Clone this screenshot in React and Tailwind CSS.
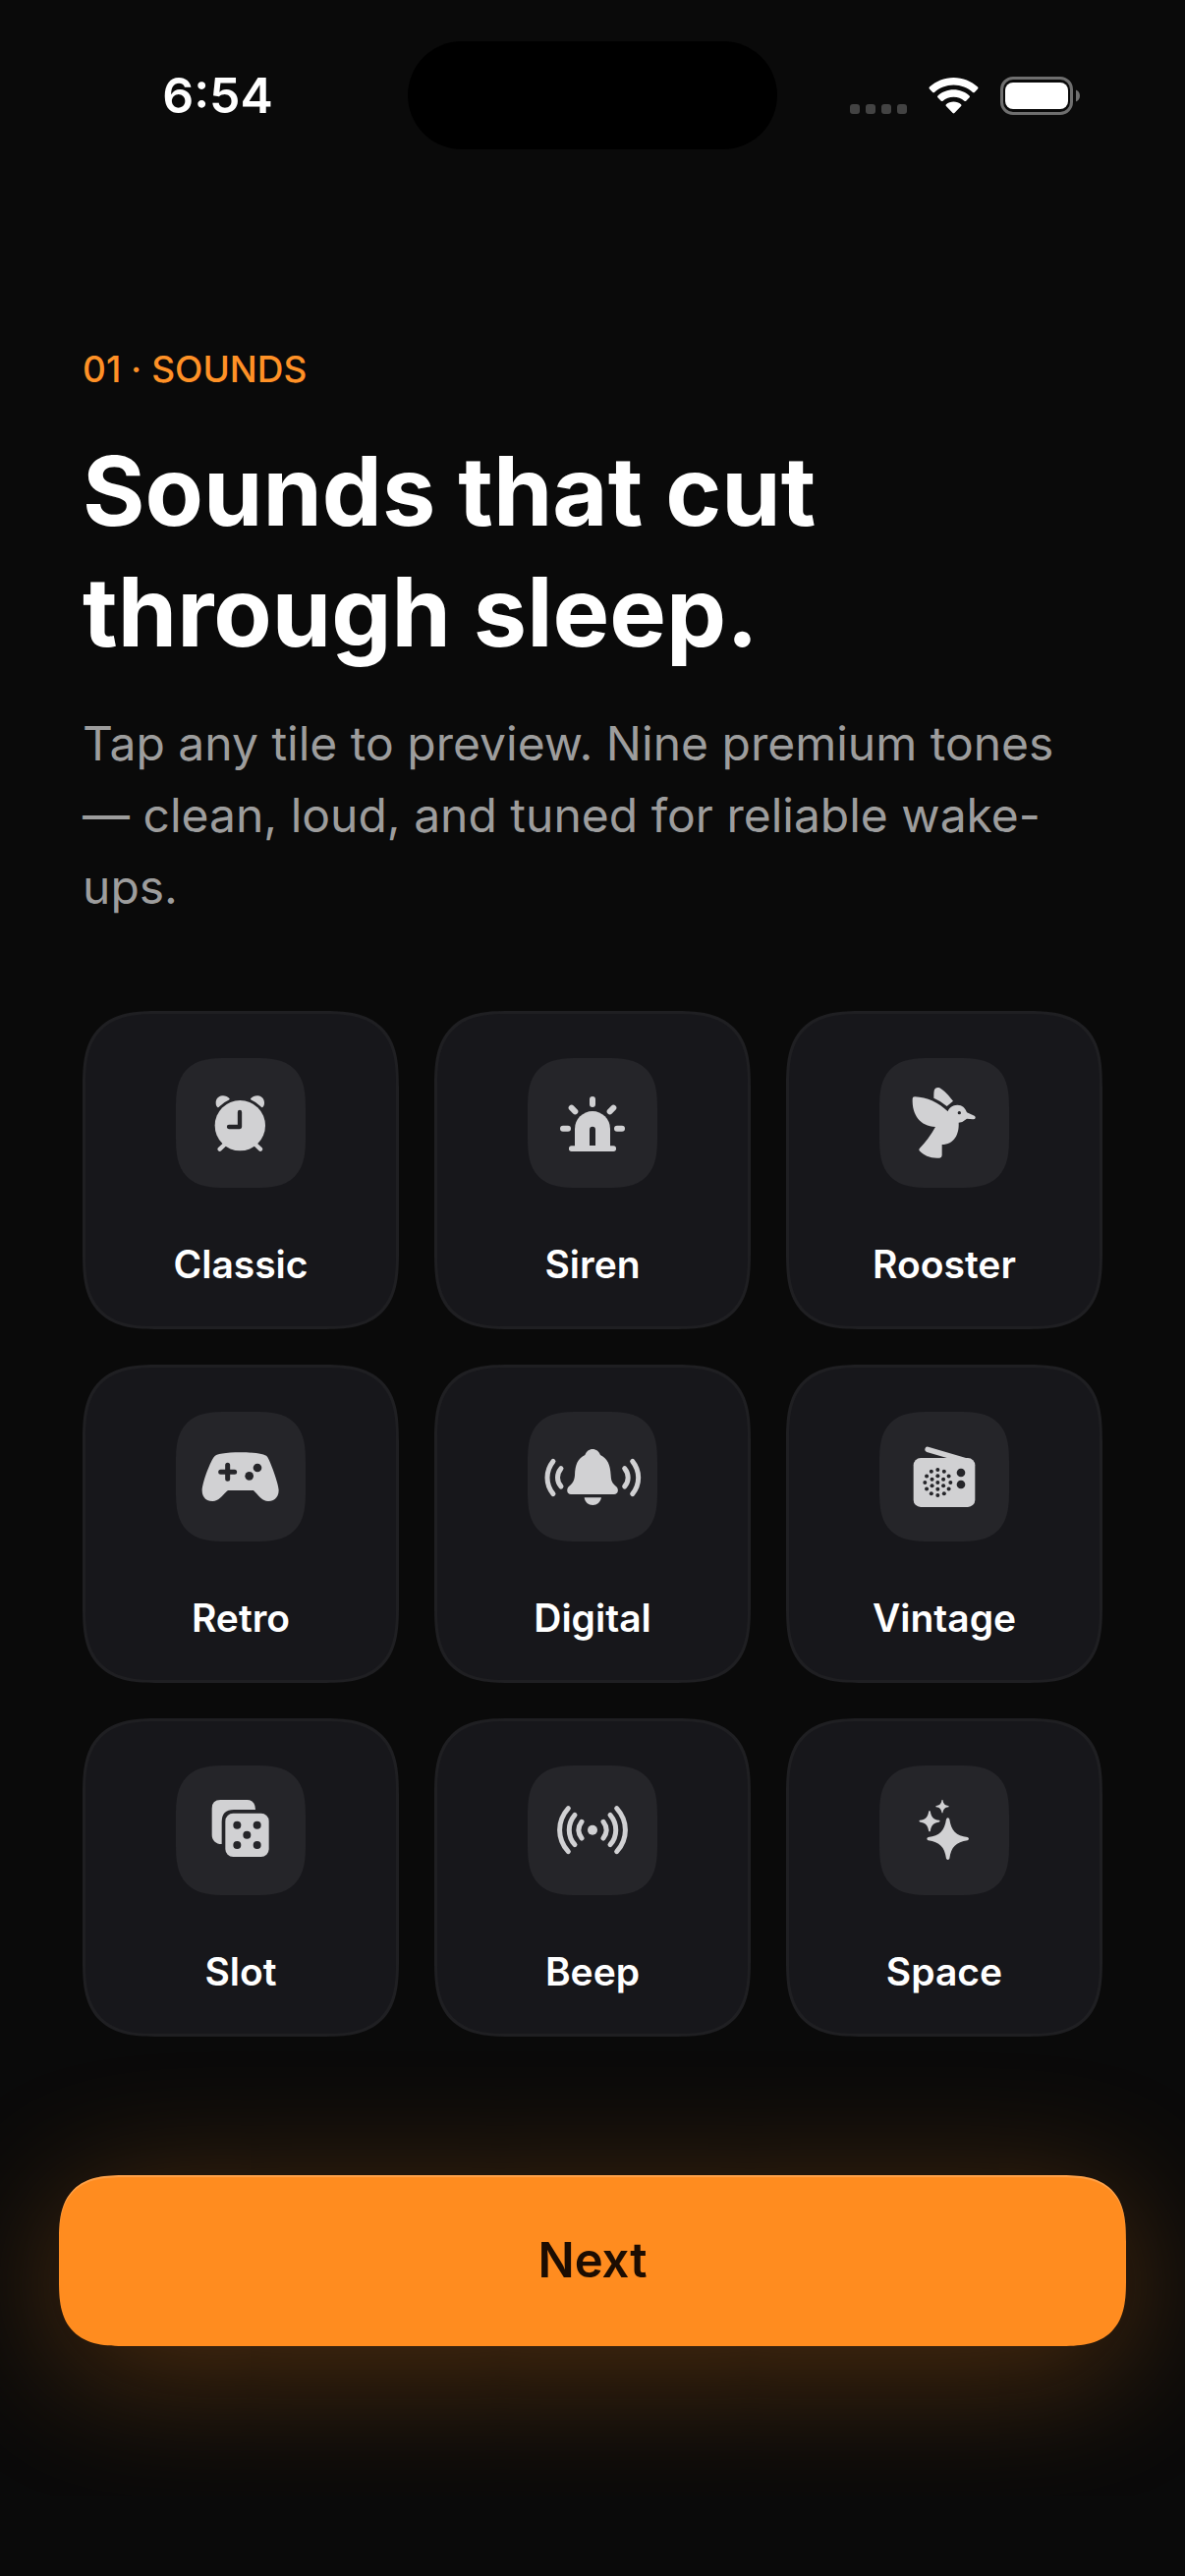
import React, { useState } from "react";

// All tile icons share a 396 unit grid that fills the icon box
const ICON = "#d1d1d3";
const CUT = "#252529";

const ClockIcon = () => (
  <>
    <circle cx="196" cy="206" r="77" fill={ICON} />
    <g fill={ICON}>
      <path
        id="clock-ear"
        d="M164 124C158 116 148 114 141 115C130 116 122 125 122 136C122 142 123 147 127 150C129 151 130 151 133 148Q146 134 161 128Q165 126 164 124Z"
      />
      <use href="#clock-ear" transform="translate(392 0) scale(-1 1)" />
    </g>
    <g fill="none" strokeWidth="13" strokeLinecap="round" strokeLinejoin="round">
      <path d="M152 261L134 278M240 261L258 278" stroke={ICON} />
      <path d="M195 165V210H162" stroke={CUT} />
    </g>
  </>
);

const SirenIcon = () => (
  <>
    <path
      d="M198 126V141M134 152L145 163M262 152L251 163M108 215H123M273 215H288"
      stroke={ICON}
      strokeWidth="18"
      strokeLinecap="round"
    />
    <path d="M144 275V216a54 54 0 0 1 108 0V275Z" fill={ICON} />
    <rect x="126" y="268" width="144" height="17" rx="8" fill={ICON} />
    <path d="M189 267V218a9 9 0 0 1 18 0V267Z" fill={CUT} />
  </>
);

const BirdIcon = () => (
  <>
    <path
      d="M101 124Q101 118 108 118C145 119 182 137 209 163C212 152 223 143 238 143C253 143 262 152 267 166L290 176Q294 179 293 183Q292 187 286 187L267 185Q255 196 242 197C244 232 228 264 191 264V297Q191 304 184 305C160 308 135 298 122 283Q119 279 123 275Q150 248 171 210C125 208 99 175 101 124Z"
      fill={ICON}
    />
    <path
      d="M166 122C166 110 166 102 168 96Q172 89 180 90C189 91 207 108 225 131L206 147Q188 131 166 122Z"
      fill={ICON}
    />
    <circle cx="244" cy="167" r="5" fill={CUT} />
  </>
);

const ControllerIcon = () => (
  <>
    <path
      d="M117 137C122 129 152 124 197 124C242 124 272 129 279 137C286 145 314 219 314 239C314 259 302 273 282 273C267 273 262 266 239 242Q238 240 236 240H160Q158 240 156 242C132 266 127 273 112 273C92 273 80 261 80 241C80 214 108 146 117 137Z"
      fill={ICON}
    />
    <path
      d="M158 163V205M137 184H179"
      stroke={CUT}
      strokeWidth="15"
      strokeLinecap="round"
    />
    <circle cx="249" cy="171" r="13" fill={CUT} />
    <circle cx="224" cy="196" r="13" fill={CUT} />
  </>
);

const BellIcon = () => (
  <>
    <path
      d="M198 114C209 114 218 121 222 132C244 143 252 161 254 194C255 214 259 217 271 229C279 237 277 252 264 252H132C119 252 118 237 125 229C138 217 142 212 144 194C145 161 153 143 175 132C179 121 188 114 198 114Z"
      fill={ICON}
    />
    <path d="M173 262H225C222 277 212 285 199 285C185 285 175 277 173 262Z" fill={ICON} />
    <path
      d="M78 151C54 181 54 221 78 251M102 173C88 190 88 212 102 228M320 151C344 181 344 221 320 251M296 173C310 190 310 212 296 228"
      fill="none"
      stroke={ICON}
      strokeWidth="15"
      strokeLinecap="round"
    />
  </>
);

const RadioIcon = () => {
  const ring = (count, radius) =>
    Array.from({ length: count }, (_, i) => {
      const a = (i / count) * Math.PI * 2;
      return [178 + radius * Math.sin(a), 216 - radius * Math.cos(a)];
    });
  const holes = [[178, 216], ...ring(6, 20), ...ring(12, 39)];

  return (
    <>
      <rect x="104" y="141" width="188" height="150" rx="22" fill={ICON} />
      <path d="M147 115L262 149" stroke={ICON} strokeWidth="16" strokeLinecap="round" />
      {holes.map(([x, y], i) => (
        <circle key={i} cx={x} cy={y} r="6" fill={CUT} />
      ))}
      <circle cx="249" cy="186" r="13" fill={CUT} />
      <circle cx="249" cy="222" r="13" fill={CUT} />
    </>
  );
};

const DiceIcon = () => (
  <>
    <path
      d="M140 240C122 240 110 228 110 212V131Q110 105 136 105H217Q242 105 243 135H177Q140 135 140 172Z"
      fill={ICON}
    />
    <rect x="151" y="146" width="133" height="133" rx="24" fill={ICON} />
    <g fill={CUT}>
      <circle cx="187" cy="182" r="12" />
      <circle cx="248" cy="182" r="12" />
      <circle cx="217" cy="212" r="12" />
      <circle cx="187" cy="243" r="12" />
      <circle cx="248" cy="243" r="12" />
    </g>
  </>
);

const BeepIcon = () => (
  <>
    <circle cx="198" cy="197" r="15" fill={ICON} />
    <path
      d="M124 131C89 170 89 224 124 263M144 151C121 178 121 216 144 242M165 172C153 188 153 206 165 222M272 131C307 170 307 224 272 263M252 151C275 178 275 216 252 242M231 172C243 188 243 206 231 222"
      fill="none"
      stroke={ICON}
      strokeWidth="15"
      strokeLinecap="round"
    />
  </>
);

const STAR =
  "M-5 -60Q0 -68 5 -60C10 -25 25 -10 60 -5Q68 0 60 5C25 10 10 25 5 60Q0 68 -5 60C-10 25 -25 10 -60 5Q-68 0 -60 -5C-25 -10 -10 -25 -5 -60Z";

const SparklesIcon = () => (
  <g fill={ICON}>
    <path d={STAR} transform="translate(209 224)" />
    <path d={STAR} transform="translate(153 170) scale(.5)" />
    <path d={STAR} transform="translate(192 125) scale(.32)" />
  </g>
);

const sounds = [
  { id: "classic", label: "Classic", icon: ClockIcon },
  { id: "siren", label: "Siren", icon: SirenIcon },
  { id: "rooster", label: "Rooster", icon: BirdIcon },
  { id: "retro", label: "Retro", icon: ControllerIcon },
  { id: "digital", label: "Digital", icon: BellIcon },
  { id: "vintage", label: "Vintage", icon: RadioIcon },
  { id: "slot", label: "Slot", icon: DiceIcon },
  { id: "beep", label: "Beep", icon: BeepIcon },
  { id: "space", label: "Space", icon: SparklesIcon },
];

const StatusBar = () => (
  <header className="grid grid-cols-[1fr_376px_1fr] items-center pt-[42px]">
    <span className="justify-self-center pl-[28px] text-[50px] leading-none font-semibold">
      6:54
    </span>
    <div className="h-[110px] rounded-full bg-black" />
    <div className="flex items-center justify-end gap-[22px] pr-[107px]">
      <div className="flex gap-[6px] pt-7">
        <span className="size-[10px] rounded-[3px] bg-[#434343]" />
        <span className="size-[10px] rounded-[3px] bg-[#434343]" />
        <span className="size-[10px] rounded-[3px] bg-[#434343]" />
        <span className="size-[10px] rounded-[3px] bg-[#434343]" />
      </div>
      <svg className="h-[37px] w-[51px]" viewBox="0 0 51 37" fill="#fff">
        <path d="M25.5 0C35 0 43.500 3.600 50.100 9.600Q51 10.600 50.100 11.500L46.800 14.900Q45.900 15.700 45 14.900C39.800 10.200 33 7.400 25.500 7.400S11.200 10.200 6 14.900Q5.100 15.700 4.200 14.900L.9 11.500Q0 10.600 .9 9.600C7.500 3.600 16 0 25.500 0Z" />
        <path d="M25.500 12.300C31.700 12.300 37.300 14.600 41.600 18.500Q42.500 19.400 41.600 20.300L38.200 23.700Q37.300 24.500 36.400 23.700C33.500 21.200 29.700 19.700 25.500 19.700S17.500 21.200 14.600 23.700Q13.700 24.500 12.800 23.700L9.400 20.300Q8.500 19.400 9.400 18.500C13.700 14.600 19.300 12.300 25.500 12.300Z" />
        <path d="M25.500 24.500C28.400 24.500 31 25.500 33.100 27.300Q34 28.200 33.100 29.100L26.400 36Q25.500 36.900 24.600 36L17.900 29.100Q17 28.200 17.900 27.300C20 25.500 22.600 24.500 25.500 24.500Z" />
      </svg>
      <svg className="h-[39px] w-[81px]" viewBox="0 0 81 39">
        <rect x="1.500" y="1.500" width="71" height="36" rx="11.500" fill="none" stroke="#6f6f6f" strokeWidth="3" />
        <rect x="5" y="6" width="64" height="27" rx="8" fill="#fff" />
        <path d="M77 13.500C79.500 14.500 81 16.800 81 19.500S79.500 24.500 77 25.500Z" fill="#6f6f6f" />
      </svg>
    </div>
  </header>
);

const SoundTile = ({ label, icon: Icon, active, onClick }) => (
  <button
    type="button"
    aria-pressed={active}
    onClick={onClick}
    className="flex flex-col items-center rounded-[78px] border-[3px] border-[#1f1f22] bg-[#17171b] pt-[45px] pb-[39px] [corner-shape:superellipse(1.5)]"
  >
    <span className="size-[132px] rounded-[52px] bg-[#252529] [corner-shape:superellipse(1.5)]">
      <svg className="size-full" viewBox="0 0 396 396" aria-hidden="true">
        <Icon />
      </svg>
    </span>
    <span className="mt-[54px] text-[39px] leading-[48px] font-semibold">{label}</span>
  </button>
);

const App = () => {
  const [playing, setPlaying] = useState(null);

  return (
    <div className="flex min-h-screen flex-col overflow-hidden bg-[#0a0a0a] font-[Inter,sans-serif] text-white">
      <StatusBar />

      <main className="mt-[200px] px-[84px]">
        <p className="text-[37px] leading-[48px] font-medium text-[#ff9126]">01 · SOUNDS</p>
        <h1 className="mt-[38px] text-[97px] leading-[123px] font-bold">
          Sounds that cut through sleep.
        </h1>
        <p className="mt-[36px] text-[48px] leading-[73px] text-[#9d9d9d]">
          Tap any tile to preview. Nine premium tones — clean, loud, and tuned for reliable
          wake-ups.
        </p>

        {/* Sound grid */}
        <div className="mt-[90px] grid grid-cols-3 gap-[36px]">
          {sounds.map((sound) => (
            <SoundTile
              key={sound.id}
              label={sound.label}
              icon={sound.icon}
              active={playing === sound.id}
              onClick={() => setPlaying(sound.id)}
            />
          ))}
        </div>
      </main>

      <footer className="mt-auto px-[60px] pb-[234px]">
        <button
          type="button"
          className="h-[174px] w-full rounded-[68px] bg-[#ff8c1f] text-[49px] font-semibold text-[#1c0d02] shadow-[0_24px_144px_rgba(255,140,31,0.3),inset_0_2px_1px_rgba(255,255,255,0.2)] [corner-shape:superellipse(1.5)]"
        >
          Next
        </button>
      </footer>
    </div>
  );
};

export default App;
